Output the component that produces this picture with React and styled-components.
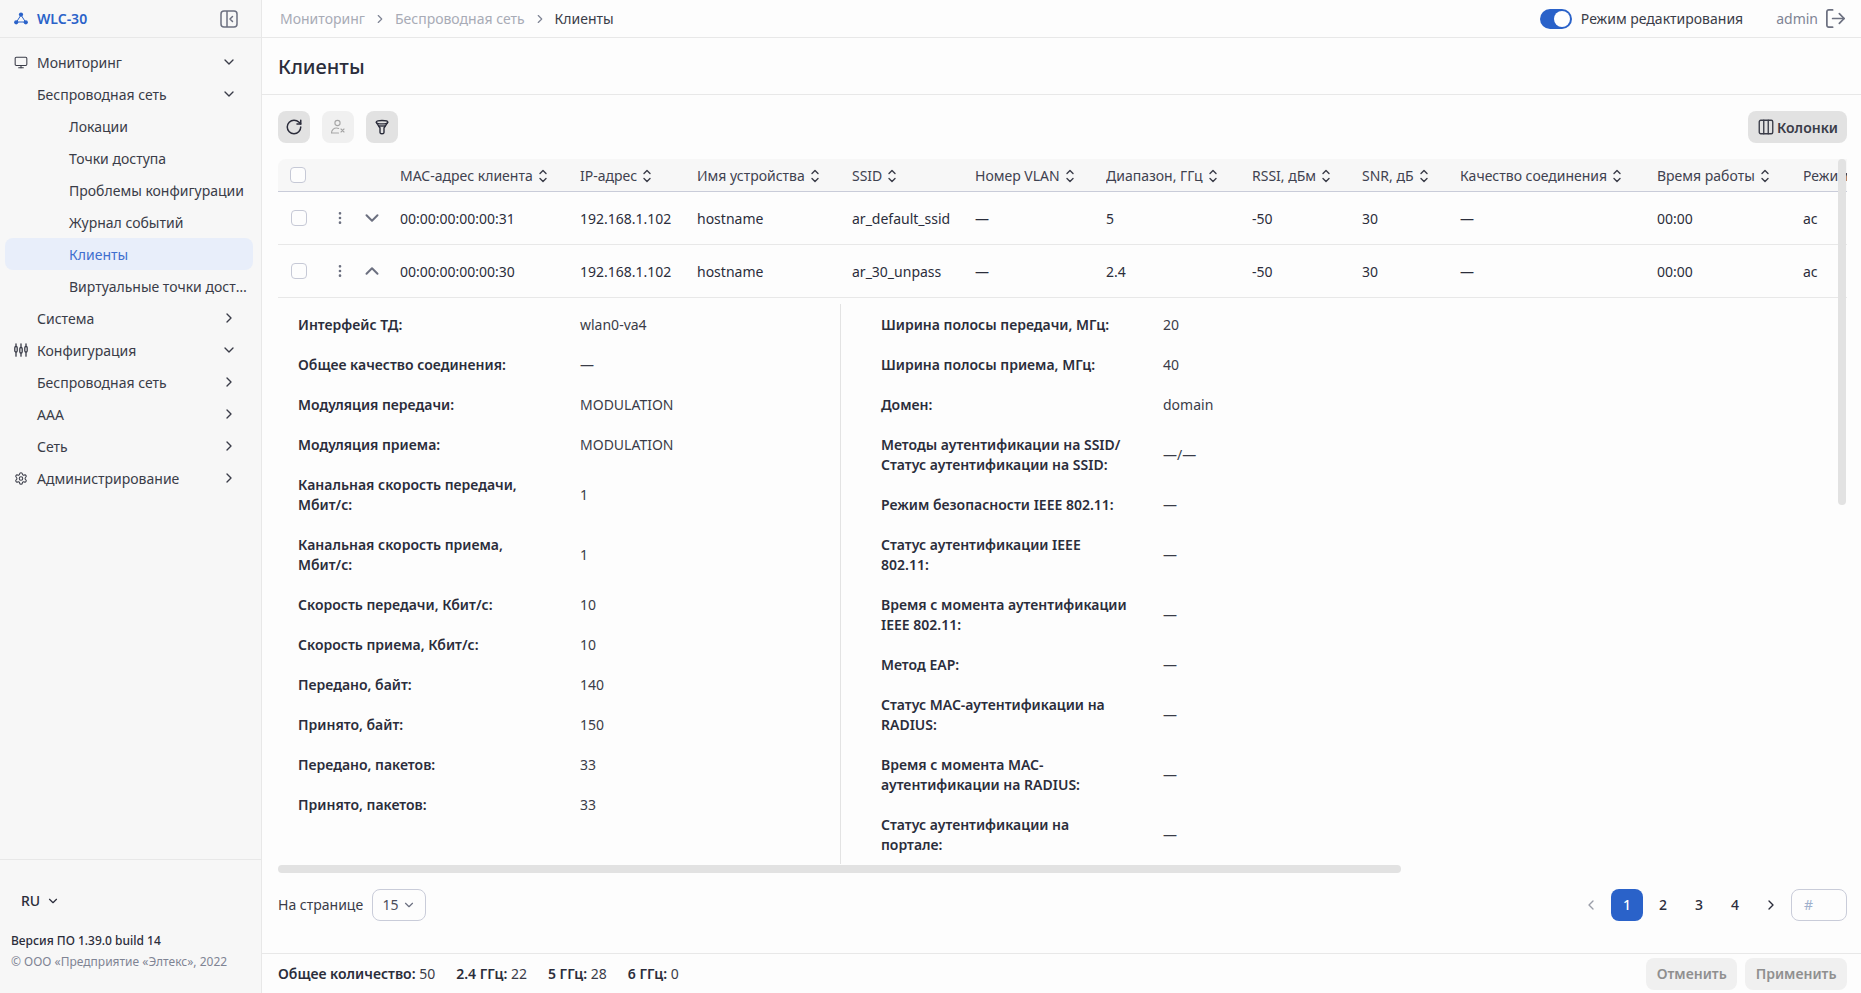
import React from 'react';
import styled, { createGlobalStyle } from 'styled-components';
import {
  Monitor, ChevronDown, ChevronUp, ChevronRight, ChevronLeft, Settings, RotateCw,
  EllipsisVertical, LogOut, Columns3,
} from 'lucide-react';

const Global = createGlobalStyle`
  html, body { margin: 0; padding: 0; height: 100%; }
  body { font-family: "Noto Sans", "Open Sans", sans-serif; font-size: 14px; line-height: 20px; color: #2b2d3b; background: #fdfdfd; }
  #root { height: 100%; }
  * { box-sizing: border-box; }
`;

const Page = styled.div`display: flex; height: 993px; overflow: hidden;`;

/* Sidebar */
const Sidebar = styled.aside`
  width: 262px; flex: none; display: flex; flex-direction: column;
  background: #f7f7f7; border-right: 1px solid #e8e8e8;
`;
const SideHead = styled.div`
  height: 38px; flex: none; display: flex; align-items: center; justify-content: space-between;
  padding: 0 23px 0 14px; border-bottom: 1px solid #e8e8e8;
`;
const Brand = styled.div`
  display: flex; align-items: center; gap: 9px; color: #2a62c9; font-weight: 600; font-size: 14px;
`;
const Nav = styled.nav`flex: 1; padding: 8px 8px 0 5px;`;
const NavRow = styled.div`
  height: 32px; display: flex; align-items: center; justify-content: space-between;
  padding-left: ${p => (p.$level === 2 ? 64 : p.$level === 1 ? 32 : 9)}px;
  padding-right: ${p => (p.$level === 2 ? 4 : 16)}px;
  border-radius: 8px; white-space: nowrap; color: ${p => (p.$active ? '#3f6fcf' : '#3a3c48')};
  background: ${p => (p.$active ? '#e8eefa' : 'transparent')};
`;
const NavLabel = styled.span`
  display: flex; align-items: center; gap: 9px; min-width: 0; padding-top: 2px;
  ${p => p.$clip && 'display: block; text-overflow: ellipsis; overflow: hidden;'}
`;
const NavIcon = styled.span`display: flex; flex: none; width: 14px; justify-content: center; color: #3a3c48; margin-top: -2px;`;
const SideFoot = styled.div`
  flex: none; height: 134px; border-top: 1px solid #e8e8e8; padding: 31px 11px 0;
`;
const Lang = styled.div`
  display: flex; align-items: center; gap: 6px; padding-left: 10px; font-weight: 500; height: 20px; margin-bottom: 19px; color: #2b2d3b;
`;
const Version = styled.div`font-size: 12px; font-weight: 500; line-height: 22px; color: #2b2d3b;`;
const Copy = styled.div`font-size: 12px; line-height: 20px; color: #7f8494;`;

/* Main */
const Main = styled.main`flex: 1; min-width: 0; display: flex; flex-direction: column;`;
const Topbar = styled.header`
  height: 38px; flex: none; display: flex; align-items: center; justify-content: space-between;
  padding: 0 14px 0 18px; border-bottom: 1px solid #e8e8e8;
`;
const Crumbs = styled.div`display: flex; align-items: center; gap: 8px; color: #a8abb6;`;
const CrumbNow = styled.span`color: #3a3c48;`;
const TopRight = styled.div`display: flex; align-items: center;`;
const Switch = styled.span`
  width: 32px; height: 20px; border-radius: 10px; background: #2a62c9; position: relative; margin-right: 9px; display: block;
  &::after { content: ''; position: absolute; right: 2px; top: 2px; width: 16px; height: 16px; border-radius: 50%; background: #fff; }
`;
const EditLabel = styled.span`color: #3a3c48; margin-right: 33px; padding-top: 1px;`;
const Admin = styled.span`color: #7f8494; margin-right: 6px;`;

const TitleBar = styled.div`
  height: 57px; flex: none; display: flex; align-items: center; padding: 2px 16px 0; border-bottom: 1px solid #e8e8e8;
`;
const Title = styled.h1`margin: 0; font-size: 20px; line-height: 28px; font-weight: 500; color: #2b2d3b;`;

const Toolbar = styled.div`
  flex: none; display: flex; align-items: center; justify-content: space-between; padding: 16px 14px 16px 16px;
`;
const ToolGroup = styled.div`display: flex; gap: 12px;`;
const IconBtn = styled.button`
  width: 32px; height: 32px; border: 0; border-radius: 8px; padding: 0; display: flex; align-items: center; justify-content: center;
  background: ${p => (p.disabled ? '#f0f0f0' : '#e2e2e2')}; color: ${p => (p.disabled ? '#a5a5a5' : '#2b2d3b')};
`;
const ColumnsBtn = styled.button`
  height: 32px; width: 99px; border: 0; border-radius: 8px; background: #e2e2e2; color: #3a3c48;
  display: flex; align-items: center; justify-content: center; gap: 2px; font: 600 14px "Noto Sans", sans-serif; padding: 0;
`;

const TableWrap = styled.div`
  flex: 1; min-height: 0; margin: 0 14px 0 16px; position: relative; overflow: hidden;
`;
const GRID = '122px 180px 117px 155px 123px 131px 146px 110px 98px 197px 146px 120px';
const HeadRow = styled.div`
  display: grid; grid-template-columns: ${GRID}; width: max-content; height: 33px;
  background: #f7f7f7; border-bottom: 1px solid #c9ccd9; border-radius: 8px 8px 0 0; color: #3f4250;
`;
const HeadCell = styled.div`display: flex; align-items: center; gap: 5px; white-space: nowrap; overflow: hidden; padding-top: 1px;`;
const Row = styled.div`
  display: grid; grid-template-columns: ${GRID}; width: max-content; height: 53px; border-bottom: 1px solid #e8e8e8;
`;
const Cell = styled.div`display: flex; align-items: center; white-space: nowrap; overflow: hidden; padding-top: 2px;`;
const Controls = styled.div`display: flex; align-items: center; padding-left: ${p => (p.$head ? 12 : 13)}px; color: #6c7080;`;
const Check = styled.span`
  width: 16px; height: 16px; border: 1.5px solid #c6c9d6; border-radius: 4px; background: #fdfdfd; display: block; flex: none;
`;
const Kebab = styled.span`display: flex; margin-left: 25px;`;
const Expand = styled.span`display: flex; margin-left: 13px;`;

const Detail = styled.div`display: grid; grid-template-columns: 562px 1fr; padding-top: 6px;`;
const DetailCol = styled.div`
  padding-left: ${p => (p.$right ? 40 : 20)}px;
  ${p => p.$right && 'border-left: 1px solid #e3e3e3;'}
`;
const Field = styled.div`display: grid; grid-template-columns: 282px 1fr; align-items: center; padding: 11px 0 9px;`;
const FieldLabel = styled.div`font-weight: 600; width: 250px; color: #2b2d3b;`;
const FieldValue = styled.div`color: #3a3c48;`;

const ThumbH = styled.div`
  position: absolute; left: 0; bottom: 0; width: 1123px; height: 8px; background: #e2e2e2; border-radius: 4px;
`;
const ThumbV = styled.div`
  position: absolute; right: 1px; top: 0; width: 8px; height: 346px; background: #e2e2e2; border-radius: 4px;
`;

const Pager = styled.div`
  flex: none; height: 81px; display: flex; align-items: flex-start; justify-content: space-between; padding: 16px 14px 0 16px;
  border-bottom: 1px solid #e8e8e8;
`;
const PerPage = styled.div`display: flex; align-items: center; gap: 9px; color: #3a3c48; height: 32px;`;
const Select = styled.div`
  width: 54px; height: 32px; border: 1px solid #c9ccd9; border-radius: 8px; display: flex; align-items: center; justify-content: center; gap: 3px; color: #4a4d5a;
`;
const Pages = styled.div`display: flex; align-items: center; gap: 4px;`;
const PageBtn = styled.span`
  width: 32px; height: 32px; border-radius: 8px; display: flex; align-items: center; justify-content: center; font-weight: 500;
  background: ${p => (p.$active ? '#2a62c9' : 'transparent')};
  color: ${p => (p.$active ? '#fff' : p.$muted ? '#9a9da8' : '#2b2d3b')};
`;
const PageInput = styled.div`
  width: 56px; height: 32px; border: 1px solid #c9ccd9; border-radius: 8px; padding: 0 12px; display: flex; align-items: center; color: #9fb0cc;
`;
const Footer = styled.footer`
  flex: none; height: 39px; display: flex; align-items: center; justify-content: space-between; padding: 0 14px 0 16px;
`;
const Stats = styled.div`display: flex; gap: 21px; color: #3a3c48;`;
const Stat = styled.span`b { font-weight: 600; color: #2b2d3b; }`;
const FootBtns = styled.div`display: flex; gap: 8px;`;
const GhostBtn = styled.button`
  height: 32px; border: 0; border-radius: 8px; background: #f0f0f0; color: #8f8f8f; padding: 0 10.5px;
  font: 600 14px "Noto Sans", sans-serif;
`;
const SortSvg = styled.svg`flex: none;`;

const Logo = () => (
  <svg width="14" height="13" viewBox="0 0 14 13" fill="none">
    <path d="M7 3 2.5 10h9z" stroke="#2a62c9" strokeWidth="1" />
    <circle cx="7" cy="2.6" r="2.1" fill="#2a62c9" />
    <circle cx="2.2" cy="10.3" r="2.1" fill="#2a62c9" />
    <circle cx="11.8" cy="10.3" r="2.1" fill="#2a62c9" />
  </svg>
);
const Collapse = () => (
  <svg width="18" height="18" viewBox="0 0 18 18" fill="none" stroke="#6c7080" strokeWidth="1.5">
    <rect x="1" y="1" width="16" height="16" rx="3" />
    <path d="M7 1v16" />
    <path d="M12.5 6.5 10 9l2.5 2.5" strokeLinecap="round" strokeLinejoin="round" />
  </svg>
);
const Sliders = () => (
  <svg width="14" height="14" viewBox="0 0 14 14" fill="none" stroke="#3a3c48" strokeWidth="1.3" strokeLinecap="round">
    <path d="M2 .8v12.4M7 .8v12.4M12 .8v12.4" />
    <rect x=".8" y="3.5" width="2.4" height="5.5" rx="1.2" fill="#f7f7f7" />
    <rect x="5.8" y="4.5" width="2.4" height="5.5" rx="1.2" fill="#f7f7f7" />
    <rect x="10.8" y="3.5" width="2.4" height="5.5" rx="1.2" fill="#f7f7f7" />
  </svg>
);
const UserOff = () => (
  <svg width="16" height="16" viewBox="0 0 16 16" fill="none" stroke="currentColor" strokeWidth="1.1" strokeLinecap="round">
    <circle cx="7.5" cy="4" r="2.6" />
    <path d="M1.5 14c0-3.2 2.4-5 5-5 1 0 1.6.2 2.2.4M1.5 14h7" />
    <path d="m11 10 3 3M14 10l-3 3" />
  </svg>
);
const Funnel = () => (
  <svg width="16" height="16" viewBox="0 0 16 16" fill="none" stroke="currentColor" strokeWidth="1.4" strokeLinejoin="round">
    <ellipse cx="8" cy="3.2" rx="5.8" ry="1.7" />
    <path d="M2.2 3.2 6 9v4.5c0 .8.9 1.2 2 1.2s2-.4 2-1.2V9l3.8-5.8" />
    <path d="M4.4 7h7.2" />
  </svg>
);
const Sort = () => (
  <SortSvg width="10" height="16" viewBox="0 0 10 16" fill="none" stroke="#3a3c48" strokeWidth="1.4" strokeLinecap="round" strokeLinejoin="round">
    <path d="M2 5.5 5 2.5l3 3M2 10.5l3 3 3-3" />
  </SortSvg>
);

const Nest = ({ level, label, icon, chev, active, clip }) => (
  <NavRow $level={level} $active={active}>
    <NavLabel $clip={clip}>
      {icon && <NavIcon>{icon}</NavIcon>}
      {label}
    </NavLabel>
    {chev === 'down' && <ChevronDown size={16} strokeWidth={2} color="#3a3c48" />}
    {chev === 'right' && <ChevronRight size={16} strokeWidth={2} color="#3a3c48" />}
  </NavRow>
);

const heads = ['MAC-адрес клиента', 'IP-адрес', 'Имя устройства', 'SSID', 'Номер VLAN', 'Диапазон, ГГц', 'RSSI, дБм', 'SNR, дБ', 'Качество соединения', 'Время работы'];

const DataRow = ({ open, mac, ssid, band }) => (
  <Row>
    <Controls>
      <Check />
      <Kebab><EllipsisVertical size={16} strokeWidth={2} /></Kebab>
      <Expand>{open ? <ChevronUp size={22} strokeWidth={2.2} /> : <ChevronDown size={22} strokeWidth={2.2} />}</Expand>
    </Controls>
    {[mac, '192.168.1.102', 'hostname', ssid, '—', band, '-50', '30', '—', '00:00', 'ac'].map((v, i) => <Cell key={i}>{v}</Cell>)}
  </Row>
);

const left = [
  ['Интерфейс ТД:', 'wlan0-va4'], ['Общее качество соединения:', '—'], ['Модуляция передачи:', 'MODULATION'], ['Модуляция приема:', 'MODULATION'],
  ['Канальная скорость передачи, Мбит/с:', '1'], ['Канальная скорость приема, Мбит/с:', '1'], ['Скорость передачи, Кбит/с:', '10'], ['Скорость приема, Кбит/с:', '10'],
  ['Передано, байт:', '140'], ['Принято, байт:', '150'], ['Передано, пакетов:', '33'], ['Принято, пакетов:', '33'],
];
const right = [
  ['Ширина полосы передачи, МГц:', '20'], ['Ширина полосы приема, МГц:', '40'], ['Домен:', 'domain'],
  ['Методы аутентификации на SSID/ Статус аутентификации на SSID:', '—/—'], ['Режим безопасности IEEE 802.11:', '—'], ['Статус аутентификации IEEE 802.11:', '—'],
  ['Время с момента аутентификации IEEE 802.11:', '—'], ['Метод EAP:', '—'], ['Статус MAC-аутентификации на RADIUS:', '—'],
  ['Время с момента MAC-аутентификации на RADIUS:', '—'], ['Статус аутентификации на портале:', '—'],
];

export default function App() {
  return (
    <Page>
      <Global />
      <Sidebar>
        <SideHead>
          <Brand><Logo />WLC-30</Brand>
          <Collapse />
        </SideHead>
        <Nav>
          <Nest label="Мониторинг" icon={<Monitor size={17} strokeWidth={1.8} />} chev="down" />
          <Nest level={1} label="Беспроводная сеть" chev="down" />
          <Nest level={2} label="Локации" />
          <Nest level={2} label="Точки доступа" />
          <Nest level={2} label="Проблемы конфигурации" />
          <Nest level={2} label="Журнал событий" />
          <Nest level={2} label="Клиенты" active />
          <Nest level={2} label="Виртуальные точки доступа" clip />
          <Nest level={1} label="Система" chev="right" />
          <Nest label="Конфигурация" icon={<Sliders />} chev="down" />
          <Nest level={1} label="Беспроводная сеть" chev="right" />
          <Nest level={1} label="AAA" chev="right" />
          <Nest level={1} label="Сеть" chev="right" />
          <Nest label="Администрирование" icon={<Settings size={17} strokeWidth={1.8} />} chev="right" />
        </Nav>
        <SideFoot>
          <Lang>RU <ChevronDown size={14} strokeWidth={2} /></Lang>
          <Version>Версия ПО 1.39.0 build 14</Version>
          <Copy>© ООО «Предприятие «Элтекс», 2022</Copy>
        </SideFoot>
      </Sidebar>
      <Main>
        <Topbar>
          <Crumbs>
            <span>Мониторинг</span><ChevronRight size={14} color="#7f8494" />
            <span>Беспроводная сеть</span><ChevronRight size={14} color="#7f8494" />
            <CrumbNow>Клиенты</CrumbNow>
          </Crumbs>
          <TopRight>
            <Switch />
            <EditLabel>Режим редактирования</EditLabel>
            <Admin>admin</Admin>
            <LogOut size={23} strokeWidth={1.8} color="#6c7080" />
          </TopRight>
        </Topbar>
        <TitleBar><Title>Клиенты</Title></TitleBar>
        <Toolbar>
          <ToolGroup>
            <IconBtn><RotateCw size={18} strokeWidth={2} /></IconBtn>
            <IconBtn disabled><UserOff /></IconBtn>
            <IconBtn><Funnel /></IconBtn>
          </ToolGroup>
          <ColumnsBtn><Columns3 size={18} strokeWidth={1.8} />Колонки</ColumnsBtn>
        </Toolbar>
        <TableWrap>
          <HeadRow>
            <Controls $head><Check /></Controls>
            {heads.map(h => <HeadCell key={h}>{h}<Sort /></HeadCell>)}
            <HeadCell>Режим</HeadCell>
          </HeadRow>
          <DataRow mac="00:00:00:00:00:31" ssid="ar_default_ssid" band="5" />
          <DataRow open mac="00:00:00:00:00:30" ssid="ar_30_unpass" band="2.4" />
          <Detail>
            <DetailCol>
              {left.map(([k, v]) => <Field key={k}><FieldLabel>{k}</FieldLabel><FieldValue>{v}</FieldValue></Field>)}
            </DetailCol>
            <DetailCol $right>
              {right.map(([k, v]) => <Field key={k}><FieldLabel>{k}</FieldLabel><FieldValue>{v}</FieldValue></Field>)}
            </DetailCol>
          </Detail>
          <ThumbH />
          <ThumbV />
        </TableWrap>
        <Pager>
          <PerPage>На странице<Select>15 <ChevronDown size={14} strokeWidth={2} color="#6c7080" /></Select></PerPage>
          <Pages>
            <PageBtn $muted><ChevronLeft size={16} strokeWidth={2} /></PageBtn>
            <PageBtn $active>1</PageBtn>
            <PageBtn>2</PageBtn>
            <PageBtn>3</PageBtn>
            <PageBtn>4</PageBtn>
            <PageBtn><ChevronRight size={16} strokeWidth={2} /></PageBtn>
            <PageInput>#</PageInput>
          </Pages>
        </Pager>
        <Footer>
          <Stats>
            <Stat><b>Общее количество:</b> 50</Stat>
            <Stat><b>2.4 ГГц:</b> 22</Stat>
            <Stat><b>5 ГГц:</b> 28</Stat>
            <Stat><b>6 ГГц:</b> 0</Stat>
          </Stats>
          <FootBtns>
            <GhostBtn>Отменить</GhostBtn>
            <GhostBtn>Применить</GhostBtn>
          </FootBtns>
        </Footer>
      </Main>
    </Page>
  );
}
